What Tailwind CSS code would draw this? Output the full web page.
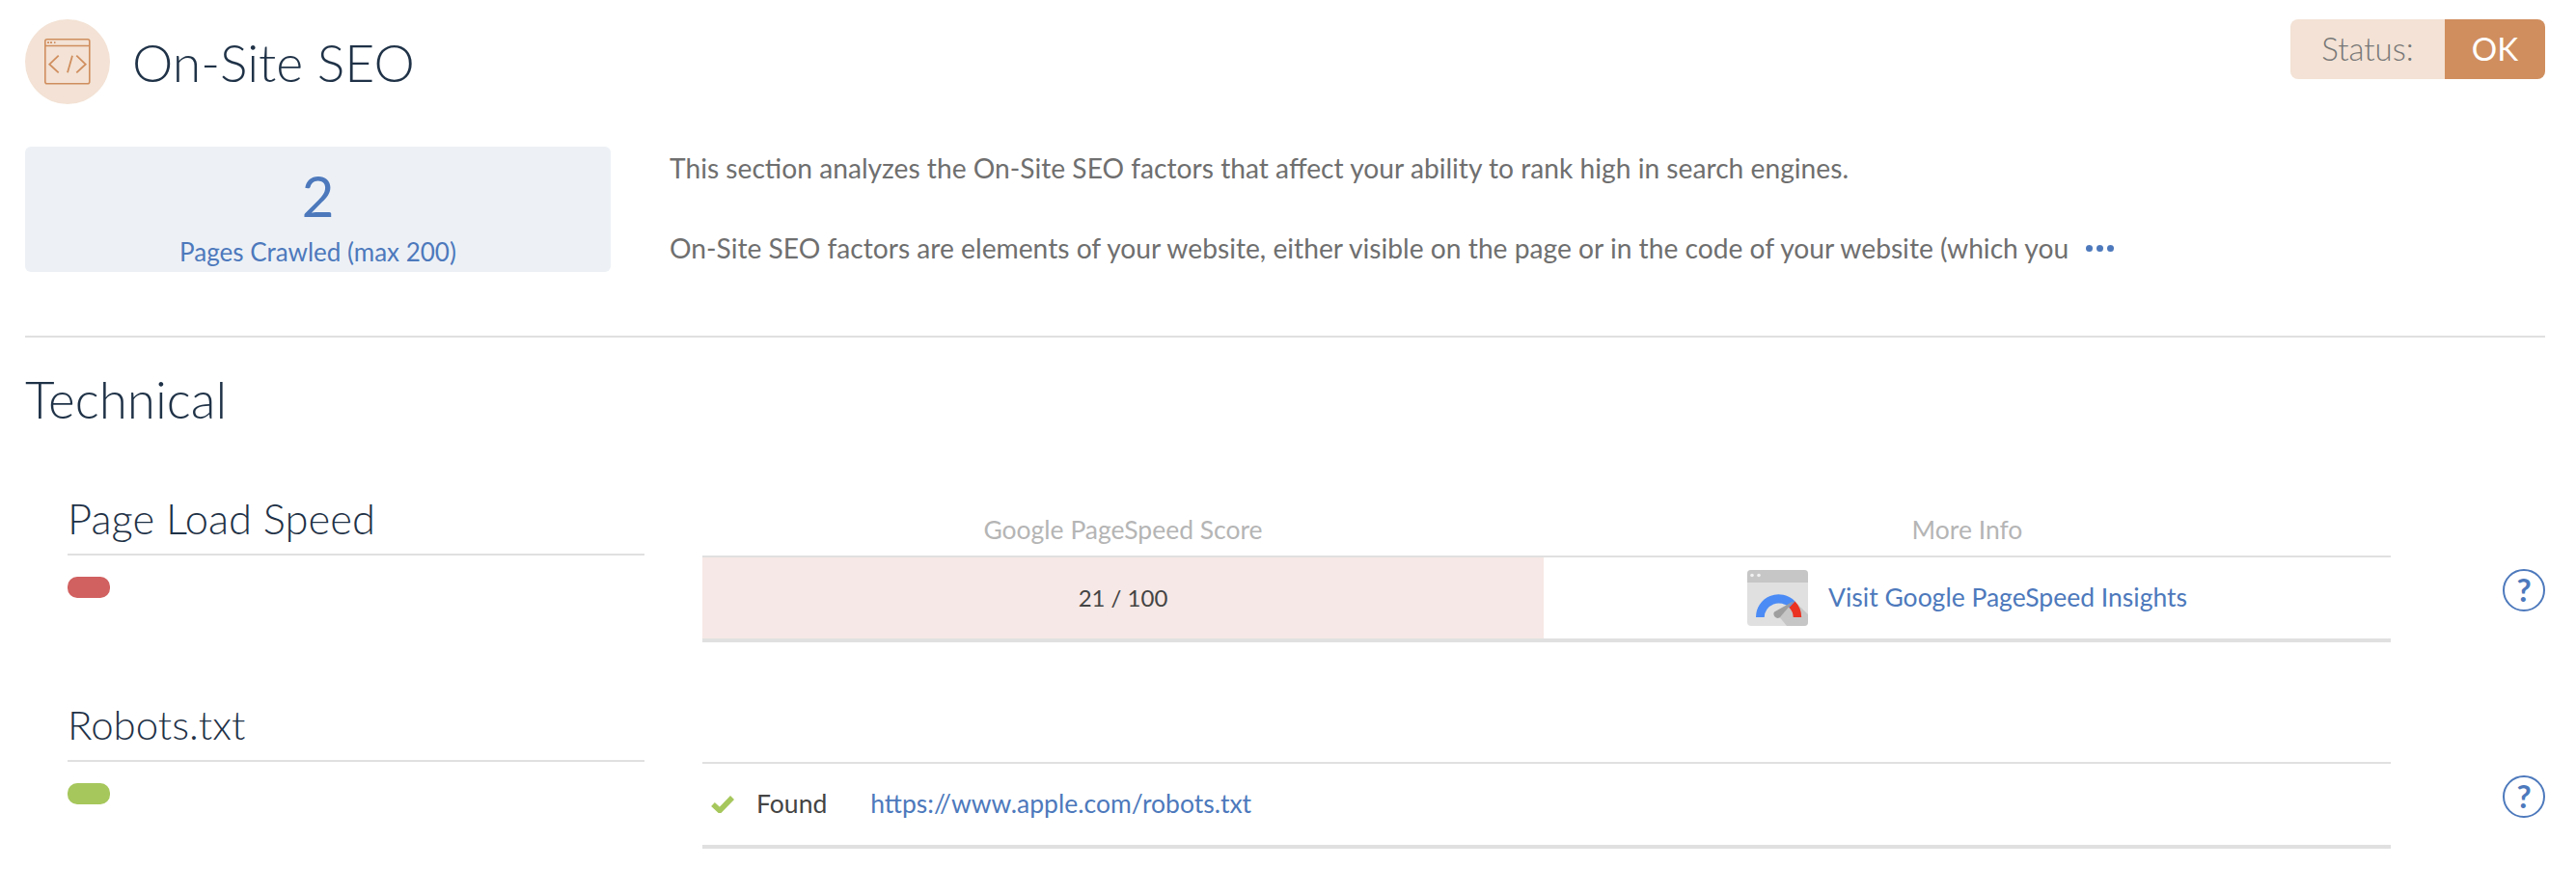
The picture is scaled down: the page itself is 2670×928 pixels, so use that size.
<!DOCTYPE html>
<html lang="en">
<head>
    <meta charset="UTF-8">
    <title>On-Site SEO</title>
    <script src="https://cdn.jsdelivr.net/npm/@tailwindcss/browser@4"></script>
</head>
<body class="bg-white h-[928px] overflow-hidden font-['Lato','Noto_Sans',sans-serif]">
<main class="pl-[26px] pr-[32px] pt-[20px]">

    <!-- section header -->
    <header class="flex items-start h-[88px]">
        <div class="w-[88px] h-[88px] rounded-full bg-[#f3e2d5] flex items-center justify-center">
            <svg width="48" height="48" viewBox="0 0 48 48" fill="none" stroke="#d08e5e" stroke-width="1.6">
                <rect x="0.8" y="0.8" width="46" height="46" rx="2"/>
                <path d="M1 7.5H47"/>
                <path d="M3 4.2H5M6 4.2H8M10 4.2H11.5" stroke-width="1.8"/>
                <path d="M14.7 17.7L5.3 26.7L14.7 35.3M29 17.7L24 35.3M33.3 17.7L42.7 26.7L33.3 35.3" stroke-width="1.8"/>
            </svg>
        </div>
        <h1 class="ml-[23px] h-[88px] flex items-center text-[53.5px] font-light text-[#1f3247]">On-Site SEO</h1>
        <div class="ml-auto flex h-[62px] rounded-[8px] overflow-hidden">
            <div class="w-[160px] bg-[#f3e2d5] flex items-center justify-center text-[33px] font-light text-[#777777]">Status:</div>
            <div class="w-[104px] bg-[#d08e5e] flex items-center justify-center text-[33px] text-white">OK</div>
        </div>
    </header>

    <!-- summary -->
    <section class="flex mt-[44px]">
        <div class="w-[607px] h-[130px] rounded-[6px] bg-[#edf1f6] flex flex-col items-center text-[#4d79bc]">
            <div class="text-[58px] leading-[70px] mt-[16px]">2</div>
            <div class="text-[26px] leading-[32px] mt-[7px]">Pages Crawled (max 200)</div>
        </div>
        <div class="ml-[61px] text-[28.2px] text-[#6f6f6f] leading-[36px]">
            <p class="mt-[4px]">This section analyzes the On-Site SEO factors that affect your ability to rank high in search engines.</p>
            <div class="flex items-center mt-[47px]">
                <p>On-Site SEO factors are elements of your website, either visible on the page or in the code of your website (which you</p>
                <div class="flex gap-[4px] ml-[18px]">
                    <span class="w-[7px] h-[7px] rounded-full bg-[#4d79bc]"></span>
                    <span class="w-[7px] h-[7px] rounded-full bg-[#4d79bc]"></span>
                    <span class="w-[7px] h-[7px] rounded-full bg-[#4d79bc]"></span>
                </div>
            </div>
        </div>
    </section>

    <hr class="mt-[66px] border-0 h-[2px] bg-[#e0e0e0]">

    <h2 class="mt-[38px] h-[52px] flex items-center text-[53px] font-light text-[#1f3247]">Technical</h2>

    <!-- page load speed -->
    <section class="flex mt-[70px] ml-[44px]">
        <div class="w-[598px]">
            <h3 class="h-[66px] border-b-2 border-[#e0e0e0] text-[43.5px] leading-[54px] font-light text-[#1f3247]">Page Load Speed</h3>
            <div class="w-[44px] h-[22px] mt-[22px] rounded-[10px] bg-[#d16060]"></div>
        </div>
        <div class="w-[1750px] ml-[60px]">
            <div class="flex h-[66px] items-end text-[26.5px] text-[#b5b5b5] pb-[6px]">
                <div class="w-[872px] text-center">Google PageSpeed Score</div>
                <div class="flex-1 text-center">More Info</div>
            </div>
            <div class="flex h-[90px] border-t-2 border-b-4 border-[#e0e0e0] text-[26.5px]">
                <div class="w-[872px] bg-[#f6e8e6] flex items-center justify-center text-[24px] text-[#444444]">21 / 100</div>
                <div class="flex-1 flex items-center justify-center">
                    <svg width="63" height="58" viewBox="0 0 63 58" class="mr-[21px]">
                        <rect width="63" height="58" rx="4" fill="#e0e0e0"/>
                        <path d="M0 13V4a4 4 0 0 1 4-4h55a4 4 0 0 1 4 4v9z" fill="#c6c6c6"/>
                        <circle cx="5" cy="5.5" r="1.8" fill="#f1f1f1"/>
                        <circle cx="12" cy="5.5" r="1.8" fill="#f1f1f1"/>
                        <path d="M31 46L48.5 32L63 46V54a4 4 0 0 1-4 4H41z" fill="#c6c6c6"/>
                        <path d="M9 49A23.5 23.5 0 0 1 49.5 32.5L43.5 39A15 15 0 0 0 17.7 49z" fill="#4b8bf5"/>
                        <path d="M49.5 32.5A23.5 23.5 0 0 1 56.2 49H47.7A15 15 0 0 0 43.5 39z" fill="#ea3323"/>
                        <path d="M28 43.5L48.5 32L33.5 49.5A4.3 4.3 0 0 1 28 43.5z" fill="#9e9e9e"/>
                    </svg>
                    <a class="text-[#4d79bc]">Visit Google PageSpeed Insights</a>
                </div>
            </div>
        </div>
        <div class="ml-[116px] mt-[80px] w-[44px] h-[44px] rounded-full border-2 border-[#4d79bc] flex items-center justify-center text-[33px] font-bold text-[#4d79bc]">?</div>
    </section>

    <!-- robots.txt -->
    <section class="flex mt-[58px] ml-[44px]">
        <div class="w-[598px]">
            <h3 class="h-[66px] border-b-2 border-[#e0e0e0] text-[42px] leading-[54px] font-light text-[#1f3247]">Robots.txt</h3>
            <div class="w-[44px] h-[22px] mt-[22px] rounded-[10px] bg-[#a6c75c]"></div>
        </div>
        <div class="w-[1750px] ml-[60px] pt-[66px]">
            <div class="flex items-center h-[90px] border-t-2 border-b-4 border-[#e0e0e0] text-[26.5px] pl-[9px]">
                <svg width="24" height="18" viewBox="0 0 24 18" fill="none" stroke="#a6c75c" stroke-width="5.5"><path d="M2 9L9 15.5L22 2"/></svg>
                <span class="ml-[23px] text-[#444444]">Found</span>
                <a class="ml-[45px] text-[#4d79bc]">https://www.apple.com/robots.txt</a>
            </div>
        </div>
        <div class="ml-[116px] mt-[80px] w-[44px] h-[44px] rounded-full border-2 border-[#4d79bc] flex items-center justify-center text-[33px] font-bold text-[#4d79bc]">?</div>
    </section>
</main>
</body>
</html>
